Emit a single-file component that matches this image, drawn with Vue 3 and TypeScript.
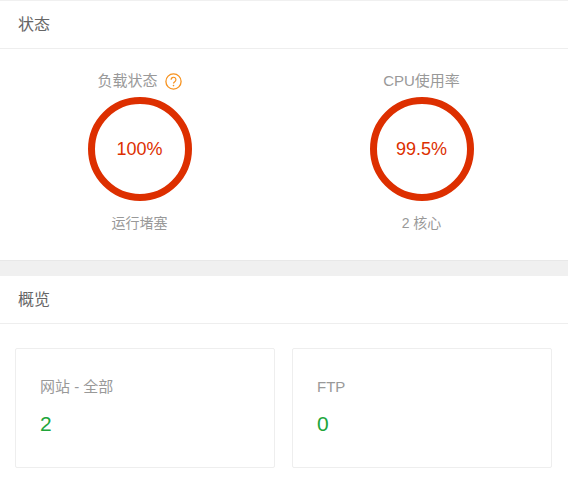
<script setup lang="ts">
interface Gauge { title: string; value: string; foot: string; help: boolean }
const gauges: Gauge[] = [
  { title: '负载状态', value: '100%', foot: '运行堵塞', help: true },
  { title: 'CPU使用率', value: '99.5%', foot: '2 核心', help: false },
]
const cards = [
  { label: '网站 - 全部', value: '2' },
  { label: 'FTP', value: '0' },
]
</script>

<template>
  <div class="page">
    <section class="panel status">
      <h2 class="head">状态</h2>
      <div class="gauges">
        <div v-for="g in gauges" :key="g.title" class="gauge">
          <div class="title">
            <span>{{ g.title }}</span>
            <svg v-if="g.help" class="help" width="17" height="17" viewBox="0 0 17 17">
              <circle cx="8.5" cy="8.5" r="7.6" fill="none" stroke="#f7921e" stroke-width="1.3" />
              <path d="M6.1 6.7a2.4 2.4 0 1 1 3.7 2c-.9.6-1.3 1-1.3 1.9" fill="none" stroke="#f7921e" stroke-width="1.2" />
              <circle cx="8.5" cy="12.6" r=".8" fill="#f7921e" />
            </svg>
          </div>
          <div class="ring">{{ g.value }}</div>
          <div class="foot">{{ g.foot }}</div>
        </div>
      </div>
    </section>
    <section class="panel overview">
      <h2 class="head">概览</h2>
      <div class="cards">
        <div v-for="c in cards" :key="c.label" class="card">
          <div class="label">{{ c.label }}</div>
          <div class="num">{{ c.value }}</div>
        </div>
      </div>
    </section>
  </div>
</template>

<style>
html, body { margin: 0; background: #fff; }
</style>

<style scoped>
.page {
  width: 568px;
  height: 488px;
  overflow: hidden;
  background: #f0f0f0;
  padding-top: 1px;
  box-sizing: border-box;
  font-family: "Liberation Sans", "Noto Sans CJK SC", sans-serif;
}
.panel { background: #fff; }
.status { border-bottom: 1px solid #e8e8e8; box-sizing: border-box; height: 260px; margin-bottom: 15px; }
.overview { height: 212px; }
.head {
  margin: 0;
  height: 48px;
  box-sizing: border-box;
  border-bottom: 1px solid #eee;
  padding-left: 18px;
  line-height: 47px;
  font-size: 16px;
  font-weight: 400;
  color: #666;
}
.gauges { display: grid; grid-template-columns: 279px 285px; }
.gauge { display: flex; flex-direction: column; align-items: center; padding-top: 21px; }
.title {
  height: 22px;
  display: flex;
  align-items: center;
  gap: 7px;
  font-size: 15px;
  line-height: 22px;
  color: #999;
}
.ring {
  margin-top: 5px;
  width: 104px;
  height: 104px;
  box-sizing: border-box;
  border: 7px solid #dd2f00;
  border-radius: 50%;
  display: flex;
  align-items: center;
  justify-content: center;
  font-size: 18px;
  color: #dd2f00;
}
.foot { margin-top: 11px; font-size: 14px; line-height: 22px; color: #999; }
.cards { display: grid; grid-template-columns: 260px 260px; gap: 17px; padding: 24px 16px 0 15px; }
.card {
  height: 120px;
  box-sizing: border-box;
  border: 1px solid #eee;
  border-radius: 2px;
  padding: 27px 24px 0;
}
.label { font-size: 15px; line-height: 22px; color: #999; }
.num { margin-top: 12px; font-size: 21px; line-height: 28px; color: #20a53a; }
</style>
